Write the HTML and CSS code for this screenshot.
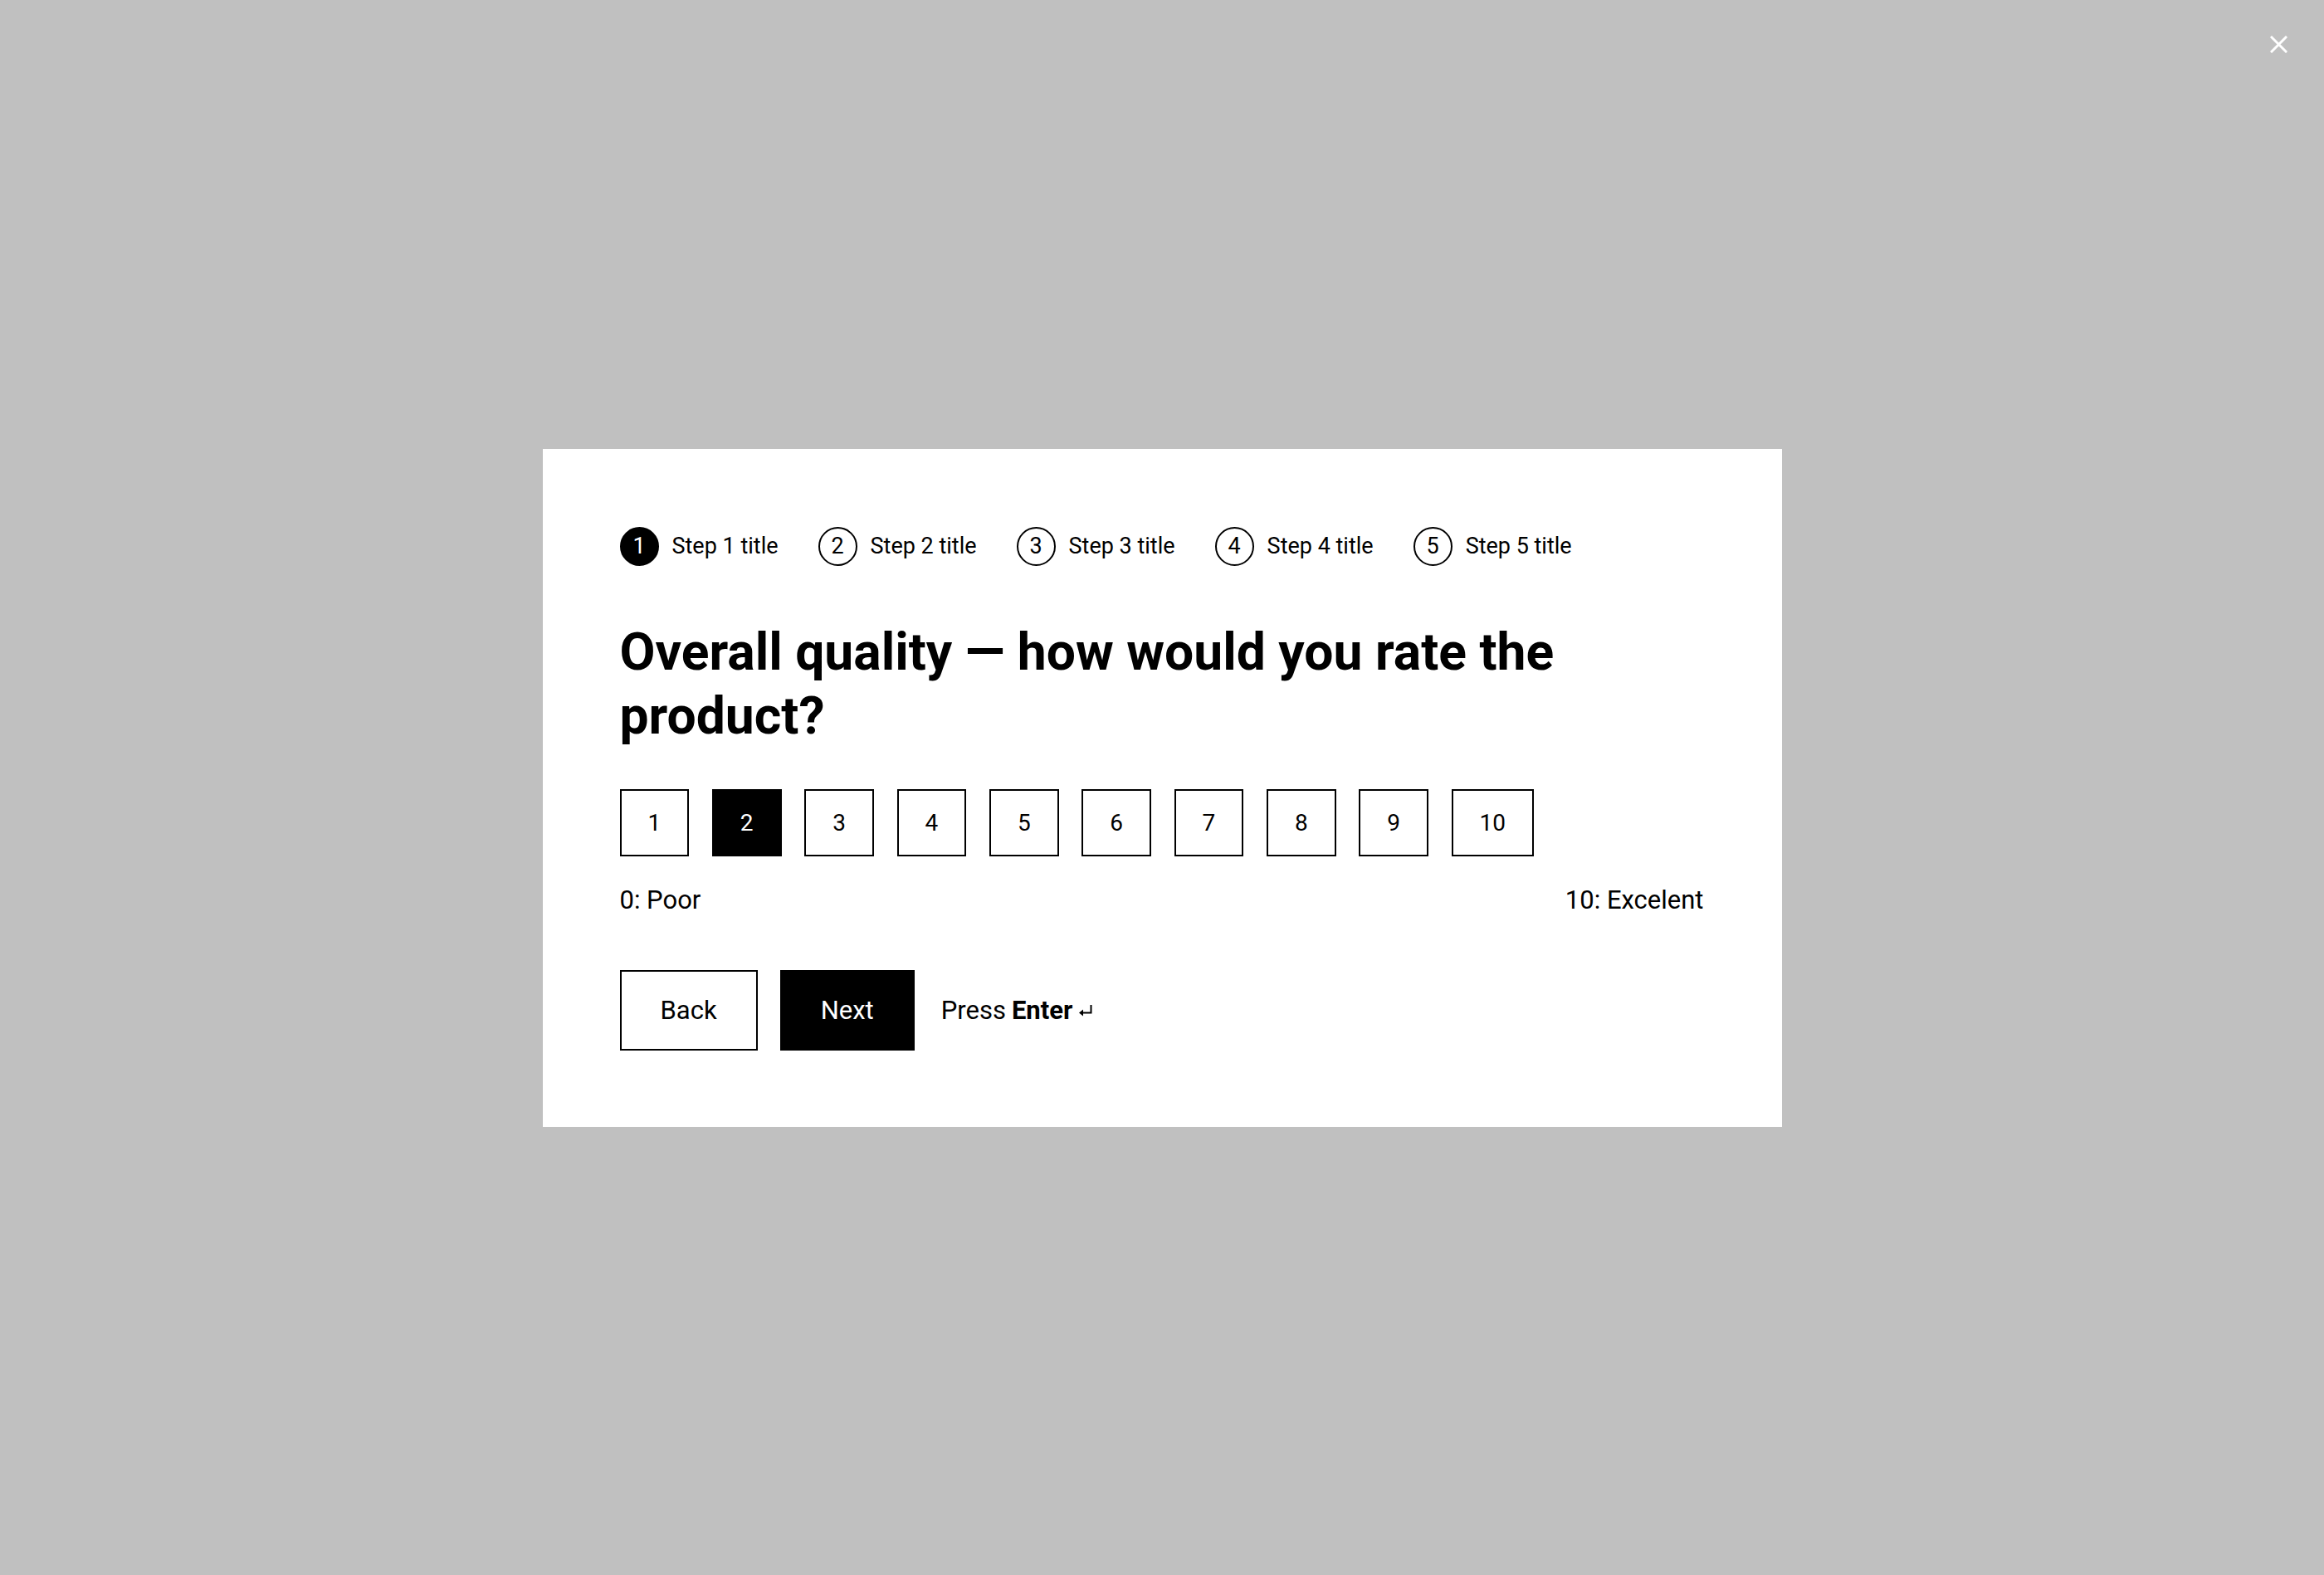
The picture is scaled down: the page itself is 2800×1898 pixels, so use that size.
FILE: index.html
```html
<!DOCTYPE html>
<html lang="en">

<head>
    <meta charset="UTF-8">
    <meta name="viewport" content="width=device-width, initial-scale=1.0">
    <title>Product survey</title>
    <link rel="stylesheet" href="styles.css">
</head>

<body class="main">
    <button class="btn-close" aria-label="Close">
        <svg width="21" height="21" viewBox="0 0 21 21">
            <path d="M2 2 L19 19 M19 2 L2 19" stroke="#fff" stroke-width="3" stroke-linecap="square" />
        </svg>
    </button>

    <div class="modal">
        <!-- Steps of the survey -->
        <ol class="steps">
            <li class="step active"><span class="step-num">1</span>Step 1 title</li>
            <li class="step"><span class="step-num">2</span>Step 2 title</li>
            <li class="step"><span class="step-num">3</span>Step 3 title</li>
            <li class="step"><span class="step-num">4</span>Step 4 title</li>
            <li class="step"><span class="step-num">5</span>Step 5 title</li>
        </ol>

        <h1 class="question">Overall quality — how would you rate the product?</h1>

        <div class="scale">
            <button class="scale-btn">1</button>
            <button class="scale-btn selected">2</button>
            <button class="scale-btn">3</button>
            <button class="scale-btn">4</button>
            <button class="scale-btn">5</button>
            <button class="scale-btn">6</button>
            <button class="scale-btn">7</button>
            <button class="scale-btn">8</button>
            <button class="scale-btn">9</button>
            <button class="scale-btn">10</button>
        </div>

        <div class="scale-labels">
            <span>0: Poor</span>
            <span>10: Excelent</span>
        </div>

        <div class="actions">
            <button class="btn">Back</button>
            <button class="btn btn-primary">Next</button>
            <span class="hint">Press <b>Enter</b>
                <svg class="enter-icon" width="18" height="16" viewBox="0 0 18 16">
                    <path d="M15.5 1 V10.5 H3" fill="none" stroke="#000" stroke-width="2" />
                    <path d="M1 10.5 L6 6.5 V14.5 Z" fill="#000" />
                </svg>
            </span>
        </div>
    </div>
</body>

</html>
```

FILE: styles.css
```css
* {
    box-sizing: border-box;
}

.main {
    margin: 0;
    min-height: 100vh;
    background-color: #c0c0c0;
    font-family: Roboto, "Liberation Sans", sans-serif;
    color: #000;
    display: flex;
    align-items: center;
    justify-content: center;
}

button {
    font-family: inherit;
    cursor: pointer;
}

/* Close button sits over the page, top right */
.btn-close {
    position: absolute;
    top: 43px;
    right: 44px;
    width: 21px;
    height: 21px;
    padding: 0;
    border: none;
    background: none;
    display: flex;
}

.modal {
    width: 1493px;
    padding: 94px 94px 92px 93px;
    background-color: #fff;
}

/* Steps row */
.steps {
    list-style: none;
    margin: 0;
    padding: 0;
    display: flex;
    align-items: center;
    gap: 48px;
    font-size: 27px;
}

.step {
    display: flex;
    align-items: center;
    gap: 16px;
}

.step-num {
    width: 47px;
    height: 47px;
    border: 2px solid #000;
    border-radius: 50%;
    display: flex;
    align-items: center;
    justify-content: center;
    font-size: 27px;
}

.step.active .step-num {
    background-color: #000;
    color: #fff;
}

.question {
    margin: 65px 0 50px;
    font-size: 62.4px;
    line-height: 77px;
    font-weight: 700;
}

/* Rating buttons */
.scale {
    display: flex;
    gap: 27.6px;
}

.scale-btn {
    padding: 22px 32px;
    border: 2px solid #000;
    background-color: #fff;
    color: #000;
    font-size: 28px;
    line-height: 33px;
}

.scale-btn.selected {
    background-color: #000;
    color: #fff;
}

.scale-labels {
    margin-top: 36px;
    display: flex;
    justify-content: space-between;
    font-size: 31px;
    line-height: 33px;
}

/* Back / Next */
.actions {
    margin-top: 68px;
    display: flex;
    align-items: center;
    gap: 27px;
}

.btn {
    padding: 30px 47px;
    border: 2px solid #000;
    background-color: #fff;
    color: #000;
    font-size: 31px;
    line-height: 33px;
}

.btn-primary {
    background-color: #000;
    color: #fff;
}

.hint {
    margin-left: 5px;
    font-size: 31px;
    display: flex;
    align-items: center;
    gap: 7px;
}

.hint b {
    font-weight: 700;
}

.enter-icon {
    margin-top: 2px;
}
```
